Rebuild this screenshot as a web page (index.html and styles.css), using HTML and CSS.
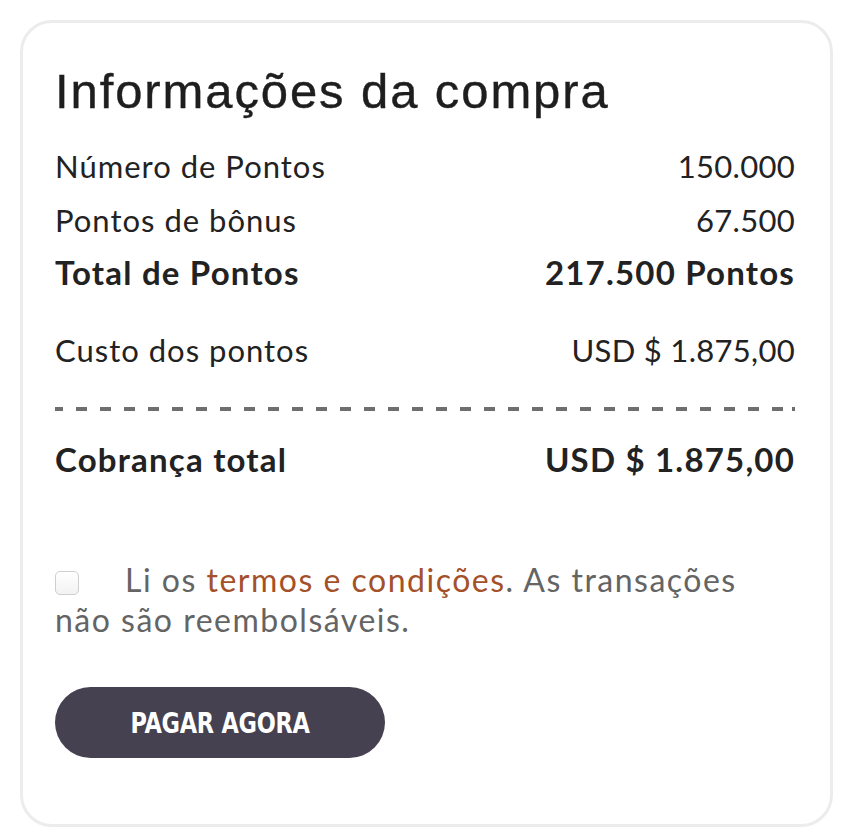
FILE: index.html
```html
<!DOCTYPE html>
<html lang="pt">
<head>
<meta charset="utf-8">
<link rel="stylesheet" href="styles.css">
<title>Informações da compra</title>
</head>
<body>
<section class="card">
  <h1 class="title">Informações da compra</h1>
  <div class="summary">
    <div class="row"><span>Número de Pontos</span><span class="value">150.000</span></div>
    <div class="row"><span>Pontos de bônus</span><span class="value">67.500</span></div>
    <div class="row row-bold"><span>Total de Pontos</span><span>217.500 Pontos</span></div>
    <div class="row row-cost"><span>Custo dos pontos</span><span class="value">USD $ 1.875,00</span></div>
  </div>
  <div class="divider"></div>
  <div class="row row-bold row-total"><span>Cobrança total</span><span>USD $ 1.875,00</span></div>
  <p class="terms"><input type="checkbox" class="check">Li os <a href="#" class="link">termos e condições</a>. As transações não são reembolsáveis.</p>
  <button class="pay"><span class="pay-label">PAGAR AGORA</span></button>
</section>
</body>
</html>
```

FILE: styles.css
```css
html, body {
  margin: 0;
  padding: 0;
  background: #ffffff;
}
body {
  padding: 20px 0 0 20px;
  font-family: "Lato", "Open Sans", sans-serif;
  color: #222222;
}
.card {
  box-sizing: border-box;
  width: 813px;
  height: 807px;
  border: 3px solid #ececec;
  border-radius: 32px;
  padding: 40px 35px 0 32px;
  display: flex;
  flex-direction: column;
}
.title {
  margin: 0;
  font-family: "Liberation Sans", Arial, sans-serif;
  font-weight: 400;
  font-size: 49px;
  line-height: 56px;
  letter-spacing: 1.9px;
  color: #1e1e1e;
  -webkit-text-stroke: 0.4px #1e1e1e;
}
.summary {
  margin-top: 20px;
  display: flex;
  flex-direction: column;
}
.row {
  display: flex;
  justify-content: space-between;
  font-size: 31px;
  line-height: 54px;
  letter-spacing: 1px;
}
.value {
  letter-spacing: 0.3px;
}
.row-bold {
  font-weight: 700;
  font-size: 33px;
  line-height: 50px;
  letter-spacing: 1.2px;
}
.row-cost {
  margin-top: 26px;
}
.divider {
  margin-top: 30px;
  height: 4px;
  background: repeating-linear-gradient(to right, #6e6e6e 0 11px, transparent 11px 24px);
  background-position: -3px 0;
}
.row-total {
  margin-top: 23px;
}
.terms {
  margin: 76px 0 0 0;
  font-size: 32px;
  line-height: 40px;
  color: #646464;
  letter-spacing: 1.5px;
}
.check {
  appearance: none;
  -webkit-appearance: none;
  box-sizing: border-box;
  width: 24px;
  height: 24px;
  margin: 0 46px 0 0;
  vertical-align: -3px;
  border: 1px solid #cfcfcf;
  border-radius: 5px;
  background: linear-gradient(#ffffff, #f2f2f2);
}
.link {
  color: #a4512a;
  text-decoration: none;
}
.pay {
  margin-top: 47px;
  width: 330px;
  height: 71px;
  border: none;
  border-radius: 36px;
  background: #454150;
  color: #ffffff;
  font-family: "DejaVu Sans Condensed", "Liberation Sans", sans-serif;
  font-weight: 700;
  font-size: 29px;
  padding: 0;
}
.pay-label {
  display: inline-block;
  transform: scaleX(0.86);
  letter-spacing: -0.3px;
}
```
